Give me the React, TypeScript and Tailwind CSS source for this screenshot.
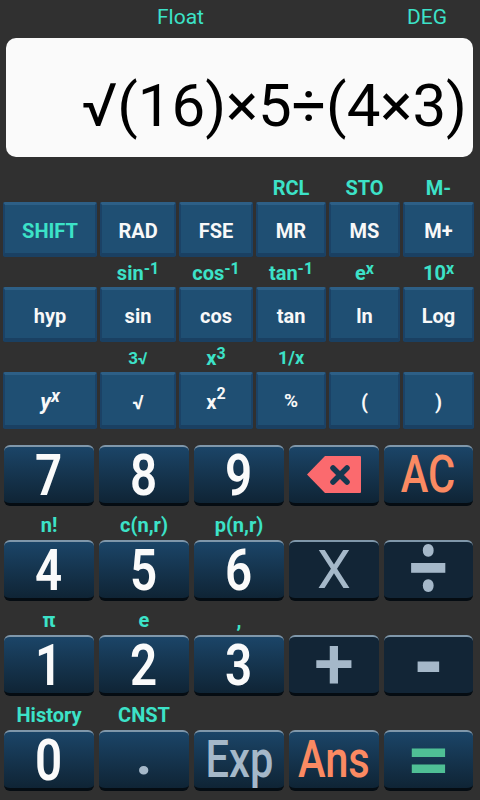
import React from 'react';

const Label = ({ children }: { children?: React.ReactNode }) => (
  <div className="h-[30px] flex items-end justify-center pb-[2px] text-[20px] leading-[24px] font-bold text-[#3ce2c8] whitespace-nowrap">{children}</div>
);

const Sup = ({ children }: { children: React.ReactNode }) => (
  <span className="text-[16px] leading-none relative -top-[8px] font-bold">{children}</span>
);

const FnKey = ({ children, accent, tall }: { children: React.ReactNode; accent?: boolean; tall?: boolean }) => (
  <button
    className={`${tall ? 'h-[57px]' : 'h-[55px]'} w-full rounded-[2px] border-x-2 border-t-[3px] border-b-[4px] border-x-[#1b4266] border-t-[#2d5f86] border-b-[#1a4062] bg-[#1f4f73] flex items-center justify-center pt-[3px] text-[20px] font-bold ${accent ? 'text-[#3ce2c8]' : 'text-[#f8f8f8]'}`}
  >
    {children}
  </button>
);

const Key = ({ children, dark }: { children: React.ReactNode; dark?: boolean }) => (
  <button
    className={`h-[61px] w-full rounded-[6px] border-t-2 border-t-[#7f97aa] border-b-[3px] border-b-[#050c12] flex items-center justify-center ${dark ? 'bg-[#122536]' : 'bg-gradient-to-b from-[#1b4568] to-[#0f2435]'}`}
  >
    {children}
  </button>
);

const Big = ({ children }: { children: React.ReactNode }) => (
  <span className="inline-block text-[58px] leading-[50px] font-semibold scale-x-[0.82] text-[#fafafa]">{children}</span>
);

const Wide = ({ children, color }: { children: React.ReactNode; color: string }) => (
  <span className={`inline-block text-[52px] leading-[50px] font-medium whitespace-nowrap scale-x-[0.8] ${color}`}>{children}</span>
);

// operator glyphs on the dark keys
const Op = ({ children, className }: { children: React.ReactNode; className: string }) => (
  <span className={`inline-block leading-[50px] text-[#a5b8c9] ${className}`}>{children}</span>
);

const Backspace = () => (
  <svg width="54" height="38" viewBox="0 0 54 38">
    <path d="M18 0H53a1 1 0 0 1 1 1V36a1 1 0 0 1-1 1H18L0 18.500Z" fill="#fb6a6e" />
    <path d="M26 12L40 26M40 12L26 26" stroke="#16384f" strokeWidth="5.500" strokeLinecap="round" />
  </svg>
);

const Row = ({ labels, children }: { labels: React.ReactNode[]; children: React.ReactNode }) => (
  <div>
    <div className="grid grid-cols-[94px_76px_74px_70px_71px_71px] gap-x-[3px]">
      {labels.map((l, i) => (
        <Label key={i}>{l}</Label>
      ))}
    </div>
    <div className="grid grid-cols-[94px_76px_74px_70px_71px_71px] gap-x-[3px]">{children}</div>
  </div>
);

const NumRow = ({ labels, children }: { labels: React.ReactNode[]; children: React.ReactNode }) => (
  <div>
    <div className="grid grid-cols-[90px_90px_90px_90px_89px] gap-x-[5px]">
      {labels.map((l, i) => (
        <div key={i} className="h-[34px] flex items-end justify-center pb-[3px] text-[20px] leading-[24px] font-bold text-[#3ce2c8]">{l}</div>
      ))}
    </div>
    <div className="grid grid-cols-[90px_90px_90px_90px_89px] gap-x-[5px]">{children}</div>
  </div>
);

export default function App() {
  return (
    <div className="w-[480px] h-[800px] bg-[#303030] overflow-hidden font-['Roboto',sans-serif]">
      <div className="h-[38px] relative text-[21px] text-[#3ce2c8]">
        <span className="absolute left-[157px] top-[2px]">Float</span>
        <span className="absolute left-[407px] top-[2px]">DEG</span>
      </div>
      <div className="mx-[6px] w-[467px] h-[119px] rounded-[10px] bg-[#fafafa] flex items-center justify-end pr-[6px] pt-[16px] text-[60px] leading-[72px] text-black whitespace-nowrap">
        √(16)×5÷(4×3)
      </div>
      <div className="pl-[3px] mt-[15px]">
        <Row labels={['', '', '', 'RCL', 'STO', 'M-']}>
          <FnKey accent>SHIFT</FnKey>
          <FnKey>RAD</FnKey>
          <FnKey>FSE</FnKey>
          <FnKey>MR</FnKey>
          <FnKey>MS</FnKey>
          <FnKey>M+</FnKey>
        </Row>
        <Row
          labels={[
            '',
            <>sin<Sup>-1</Sup></>,
            <>cos<Sup>-1</Sup></>,
            <>tan<Sup>-1</Sup></>,
            <>e<Sup>x</Sup></>,
            <>10<Sup>x</Sup></>,
          ]}
        >
          <FnKey>hyp</FnKey>
          <FnKey>sin</FnKey>
          <FnKey>cos</FnKey>
          <FnKey>tan</FnKey>
          <FnKey>ln</FnKey>
          <FnKey>Log</FnKey>
        </Row>
        <Row
          labels={[
            '',
            <span className="text-[17px]">3√</span>,
            <>x<Sup>3</Sup></>,
            <span className="text-[18px]">1/x</span>,
            '',
            '',
          ]}
        >
          <FnKey tall><span className="italic text-[22px]">y<span className="text-[18px] relative -top-[7px]">x</span></span></FnKey>
          <FnKey tall>√</FnKey>
          <FnKey tall>x<Sup>2</Sup></FnKey>
          <FnKey tall><span className="text-[19px]">%</span></FnKey>
          <FnKey tall>(</FnKey>
          <FnKey tall>)</FnKey>
        </Row>
      </div>
      <div className="pl-[4px] mt-[-18px]">
        <NumRow labels={['', '', '', '', '']}>
          <Key><Big>7</Big></Key>
          <Key><Big>8</Big></Key>
          <Key><Big>9</Big></Key>
          <Key><Backspace /></Key>
          <Key><Wide color="text-[#fb8a62]">AC</Wide></Key>
        </NumRow>
        <NumRow labels={['n!', 'c(n,r)', 'p(n,r)', '', '']}>
          <Key><Big>4</Big></Key>
          <Key><Big>5</Big></Key>
          <Key><Big>6</Big></Key>
          <Key dark><Op className="text-[54px] font-normal">X</Op></Key>
          <Key dark><Op className="text-[68px] font-bold scale-y-[1.3] -translate-y-[2px]">÷</Op></Key>
        </NumRow>
        <NumRow labels={['π', 'e', ',', '', '']}>
          <Key><Big>1</Big></Key>
          <Key><Big>2</Big></Key>
          <Key><Big>3</Big></Key>
          <Key dark><Op className="text-[72px] font-medium">+</Op></Key>
          <Key dark><Op className="text-[78px] font-bold scale-y-[1.2]">-</Op></Key>
        </NumRow>
        <NumRow labels={['History', 'CNST', '', '', '']}>
          <Key><Big>0</Big></Key>
          <Key><Op className="text-[58px] font-bold -translate-y-[6px]">.</Op></Key>
          <Key><Wide color="text-[#a5b8c9]">Exp</Wide></Key>
          <Key><Wide color="text-[#fb8a62]">Ans</Wide></Key>
          <Key><Op className="text-[76px] font-bold !text-[#4fbf95] -translate-y-[1px]">=</Op></Key>
        </NumRow>
      </div>
    </div>
  );
}
